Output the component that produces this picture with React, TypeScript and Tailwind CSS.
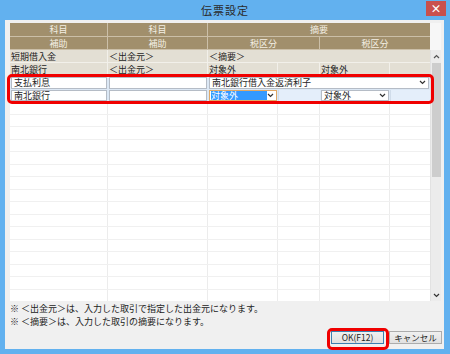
import React from "react";

const Chevron = ({ className = "" }: { className?: string }) => (
  <svg width="7" height="5" viewBox="0 0 7 5" className={className}>
    <polyline points="1,1 3.5,3.5 6,1" fill="none" stroke="#333" strokeWidth="1.2" />
  </svg>
);

const ChevronUp = () => (
  <svg width="7" height="5" viewBox="0 0 7 5">
    <polyline points="1,4 3.5,1.5 6,4" fill="none" stroke="#555" strokeWidth="1.2" />
  </svg>
);

const EmptyRow = () => (
  <div className="flex h-[12.5px] shrink-0 border-b border-[#f0f0f0] bg-white">
    <div className="w-[98px] border-r border-[#ececec]" />
    <div className="w-[100px] border-r border-[#ececec]" />
    <div className="w-[70px] border-r border-[#ececec]" />
    <div className="w-[42px] border-r border-[#ececec]" />
    <div className="w-[70px] border-r border-[#ececec]" />
    <div className="w-[40px]" />
  </div>
);

export default function App() {
  const empties = Array.from({ length: 17 });
  return (
    <div className="relative w-[450px] h-[354px] overflow-hidden bg-[#62b1ef] flex flex-col font-['Noto_Sans_CJK_JP','Liberation_Sans',sans-serif] text-[9px] leading-none text-[#1e1e1e]">
      {/* title bar */}
      <div className="relative h-[20px] shrink-0 flex items-center justify-center">
        <span className="text-[11px] text-[#2a2a2a] tracking-[1px]">伝票設定</span>
        <div className="absolute right-[4px] top-[1px] w-[20px] h-[15px] bg-[#c9504d] flex items-center justify-center text-white text-[11px] font-bold">
          ×
        </div>
      </div>

      {/* client */}
      <div className="flex-1 ml-[5px] mr-[6px] mb-[5px] bg-[#f0f0f0] flex flex-col pl-[5px] pt-[3px] pr-[3px]">
        {/* grid + scrollbar */}
        <div className="flex h-[278px] shrink-0">
          <div className="w-[420px] flex flex-col overflow-hidden bg-white">
            {/* header */}
            <div className="flex h-[14px] shrink-0 bg-[#a18f6c] text-[#f4efe4] border-b border-[#cbbfa8]">
              <div className="w-[98px] border-r border-[#cbbfa8] flex items-center justify-center">科目</div>
              <div className="w-[100px] border-r border-[#cbbfa8] flex items-center justify-center">科目</div>
              <div className="w-[222px] flex items-center justify-center">摘要</div>
            </div>
            <div className="flex h-[13px] shrink-0 bg-[#a18f6c] text-[#f4efe4] border-b border-[#cbbfa8]">
              <div className="w-[98px] border-r border-[#cbbfa8] flex items-center justify-center">補助</div>
              <div className="w-[100px] border-r border-[#cbbfa8] flex items-center justify-center">補助</div>
              <div className="w-[112px] border-r border-[#cbbfa8] flex items-center justify-center">税区分</div>
              <div className="w-[110px] flex items-center justify-center">税区分</div>
            </div>
            {/* data rows */}
            <div className="flex h-[13px] shrink-0 bg-[#e3dfd4] border-b border-[#f2f0ea]">
              <div className="w-[98px] border-r border-[#f2f0ea] flex items-center pl-[1px]">短期借入金</div>
              <div className="w-[100px] border-r border-[#f2f0ea] flex items-center pl-[1px]">＜出金元＞</div>
              <div className="w-[222px] flex items-center pl-[1px]">＜摘要＞</div>
            </div>
            <div className="flex h-[13px] shrink-0 bg-[#e3dfd4] border-b border-[#f2f0ea]">
              <div className="w-[98px] border-r border-[#f2f0ea] flex items-center pl-[1px]">南北銀行</div>
              <div className="w-[100px] border-r border-[#f2f0ea] flex items-center pl-[1px]">＜出金元＞</div>
              <div className="w-[70px] border-r border-[#f2f0ea] flex items-center pl-[1px]">対象外</div>
              <div className="w-[42px] border-r border-[#f2f0ea]" />
              <div className="w-[70px] border-r border-[#f2f0ea] flex items-center pl-[1px]">対象外</div>
              <div className="w-[40px]" />
            </div>
            {/* editable rows */}
            <div className="flex h-[13px] shrink-0 bg-[#dce8f5] py-[0.5px]">
              <div className="w-[98px] px-[1px]">
                <div className="h-full bg-white border border-[#b5bcc6] flex items-center pl-[2px]">支払利息</div>
              </div>
              <div className="w-[100px] px-[1px]">
                <div className="h-full bg-white border border-[#b5bcc6]" />
              </div>
              <div className="w-[222px] px-[1px]">
                <div className="h-full bg-white border border-[#b5bcc6] flex items-center justify-between pl-[2px] pr-[2px]">
                  <span>南北銀行借入金返済利子</span>
                  <Chevron />
                </div>
              </div>
            </div>
            <div className="flex h-[13px] shrink-0 bg-[#dce8f5] py-[0.5px] border-b border-[#c9d6e4]">
              <div className="w-[98px] px-[1px]">
                <div className="h-full bg-white border border-[#b5bcc6] flex items-center pl-[2px]">南北銀行</div>
              </div>
              <div className="w-[100px] px-[1px]">
                <div className="h-full bg-white border border-[#b5bcc6]" />
              </div>
              <div className="w-[70px] px-[1px]">
                <div className="h-full bg-white border border-[#e0a866] flex items-center justify-between pl-[1px] pr-[2px]">
                  <span className="bg-[#3399ff] text-white h-full w-[56px] flex items-center">対象外</span>
                  <Chevron />
                </div>
              </div>
              <div className="w-[42px] bg-[#e4eefa] border-l border-[#d0dcea]" />
              <div className="w-[70px] px-[1px]">
                <div className="h-full bg-white border border-[#b5bcc6] flex items-center justify-between pl-[2px] pr-[2px]">
                  <span>対象外</span>
                  <Chevron />
                </div>
              </div>
              <div className="w-[40px] bg-[#e4eefa] border-l border-[#d0dcea]" />
            </div>
            {/* empty rows */}
            {empties.map((_, i) => (
              <EmptyRow key={i} />
            ))}
          </div>
          {/* scrollbar column */}
          <div className="w-[11px] flex flex-col">
            <div className="h-[27px] shrink-0 bg-[#f7f7f7]" />
            <div className="flex-1 bg-[#ececec] flex flex-col items-center border-l border-[#e2e2e2]">
              <div className="h-[13px] shrink-0 flex items-center justify-center">
                <ChevronUp />
              </div>
              <div className="w-[9px] h-[114px] shrink-0 bg-[#cdcdcd]" />
              <div className="flex-1" />
              <div className="h-[12px] shrink-0 flex items-center justify-center">
                <Chevron />
              </div>
            </div>
          </div>
        </div>

        {/* notes */}
        <div className="mt-[1px] leading-[13px] text-[9px] text-[#222]">
          <div className="h-[13px] whitespace-nowrap">※&nbsp;＜出金元＞は、入力した取引で指定した出金元になります。</div>
          <div className="h-[13px] whitespace-nowrap">※&nbsp;＜摘要＞は、入力した取引の摘要になります。</div>
        </div>

        {/* buttons */}
        <div className="mt-[3px] flex justify-end gap-[5px] -mr-[1px]">
          <div className="w-[53px] h-[13px] border border-[#3c7fb1] bg-gradient-to-b from-[#f0f0f0] to-[#e1e1e1] flex items-center justify-center text-[8.5px]">
            OK(F12)
          </div>
          <div className="w-[53px] h-[13px] border border-[#acacac] bg-gradient-to-b from-[#f0f0f0] to-[#e1e1e1] flex items-center justify-center text-[8.5px]">
            キャンセル
          </div>
        </div>
      </div>

      {/* red highlight outlines */}
      <div className="absolute left-[7px] top-[74px] w-[427px] h-[30px] border-[3px] border-[#f00000] rounded-[5px] pointer-events-none" />
      <div className="absolute left-[327px] top-[328px] w-[62px] h-[22px] border-[3px] border-[#f00000] rounded-[5px] pointer-events-none" />
    </div>
  );
}
